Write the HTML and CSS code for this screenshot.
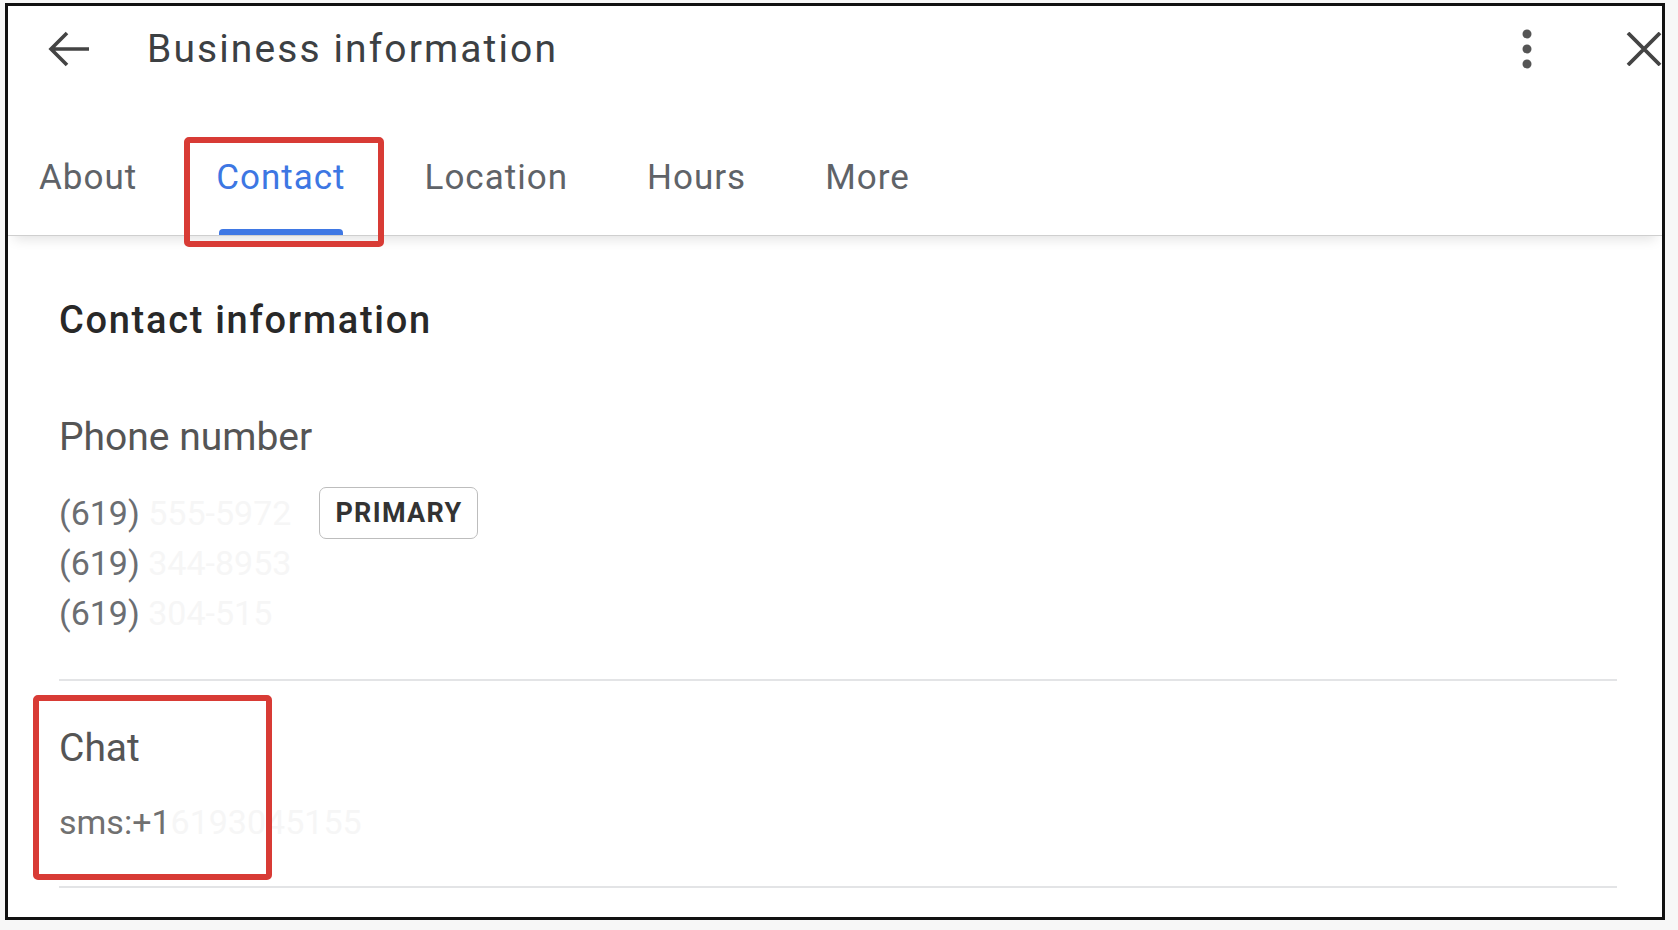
FILE: index.html
```html
<!doctype html>
<html lang="en">
  <head>
    <meta charset="utf-8">
    <title>Business information</title>
    <link rel="stylesheet" href="styles.css">
  </head>
  <body>
    <div class="frame">
      <header class="topbar">
        <svg class="back" width="44" height="44" viewBox="0 0 44 44">
          <path d="M42 22H5M20 6L4 22l16 16" fill="none" stroke="#444" stroke-width="3.6"/>
        </svg>
        <h1 class="title">Business information</h1>
        <svg class="kebab" width="12" height="42" viewBox="0 0 12 42">
          <circle cx="6" cy="6" r="4.5" fill="#555"/>
          <circle cx="6" cy="21" r="4.5" fill="#555"/>
          <circle cx="6" cy="36" r="4.5" fill="#555"/>
        </svg>
        <svg class="close" width="36" height="34" viewBox="0 0 36 34">
          <path d="M2 1l32 32M34 1L2 33" fill="none" stroke="#444" stroke-width="3.8"/>
        </svg>
      </header>

      <nav class="tabs">
        <a class="tab">
          <span class="label">About</span>
        </a>
        <a class="tab active">
          <span class="label">Contact</span>
          <span class="indicator"></span>
          <span class="callout tab-callout"></span>
        </a>
        <a class="tab">
          <span class="label">Location</span>
        </a>
        <a class="tab">
          <span class="label">Hours</span>
        </a>
        <a class="tab">
          <span class="label">More</span>
        </a>
      </nav>

      <main class="content">
        <h2 class="heading">Contact information</h2>

        <section class="field phone">
          <h3 class="field-name">Phone number</h3>
          <ul class="phones">
            <li class="phone-row">
              <span>(619) <span class="faint">555-5972</span></span>
              <span class="chip">PRIMARY</span>
            </li>
            <li class="phone-row">(619) <span class="faint">344-8953</span></li>
            <li class="phone-row">(619) <span class="faint">304-515</span></li>
          </ul>
        </section>

        <hr class="divider">

        <section class="field chat">
          <span class="callout chat-callout"></span>
          <h3 class="field-name">Chat</h3>
          <p class="value">sms:+1<span class="faint">6193045155</span></p>
        </section>

        <hr class="divider">
      </main>
    </div>
  </body>
</html>
```

FILE: styles.css
```css
html {
  background: #f7f7f7;
}

body {
  margin: 3px 0 0 5px;
  font-family: Roboto, "Liberation Sans", sans-serif;
}

.frame {
  box-sizing: border-box;
  width: 1660px;
  height: 917px;
  border: 3px solid #111;
  background: #fff;
  overflow: hidden;
}

/* header */
.topbar {
  display: flex;
  align-items: center;
  height: 86px;
  padding-left: 39px;
}

.back { flex-shrink: 0; }

.title {
  flex: 1;
  margin: 0 0 0 56px;
  font-size: 39px;
  font-weight: 400;
  line-height: 46px;
  letter-spacing: 2.1px;
  color: #3c4043;
}

.kebab { flex-shrink: 0; margin-right: 93px; }
.close { flex-shrink: 0; }

/* tabs */
.tabs {
  position: relative;
  display: flex;
  gap: 79px;
  height: 143px;
  padding-left: 31px;
  border-bottom: 1px solid #cfcfcf;
  box-shadow: 0 9px 12px -6px rgba(0, 0, 0, 0.12);
}

.tab {
  position: relative;
  display: flex;
  flex-direction: column;
  padding-top: 66px;
  font-size: 35px;
  line-height: 40px;
  letter-spacing: 1px;
  color: #5f6368;
}

.tab.active { color: #3d77e3; }

.indicator {
  margin: auto 3px 0;
  height: 6px;
  border-radius: 4px 4px 0 0;
  background: #3f78e4;
}

/* red annotation boxes */
.callout {
  position: absolute;
  box-sizing: border-box;
  border: 6px solid #d83b35;
  border-radius: 5px;
}

.tab-callout {
  top: 45px;
  left: -32px;
  right: -38px;
  height: 110px;
}

.chat-callout {
  top: 14px;
  left: -26px;
  width: 239px;
  height: 185px;
}

/* content */
.content {
  padding: 62px 45px 0 51px;
}

.heading {
  margin: 0;
  font-size: 38px;
  font-weight: 500;
  line-height: 44px;
  letter-spacing: 1.7px;
  color: #282828;
}

.field { position: relative; }

.field.phone { margin-top: 72px; }

.field-name {
  margin: 0;
  font-size: 39px;
  font-weight: 400;
  line-height: 46px;
  color: #555;
}

.phones {
  list-style: none;
  margin: 28px 0 41px;
  padding: 0;
}

.phone-row {
  display: flex;
  align-items: center;
  height: 50px;
  font-size: 34px;
  color: #6b6e72;
  white-space: pre;
}

.faint { color: #f6f6f6; }

.chip {
  box-sizing: border-box;
  display: inline-flex;
  align-items: center;
  height: 52px;
  margin-left: 28px;
  padding: 0 15px;
  border: 1.5px solid #bdbdbd;
  border-radius: 7px;
  font-size: 27px;
  font-weight: 700;
  letter-spacing: 1.3px;
  color: #333;
}

.divider {
  height: 2px;
  margin: 0;
  border: 0;
  background: #e3e4e6;
}

.field.chat {
  padding: 44px 0 40px;
}

.value {
  margin: 27px 0 0;
  font-size: 34px;
  line-height: 48px;
  color: #707070;
}
```
